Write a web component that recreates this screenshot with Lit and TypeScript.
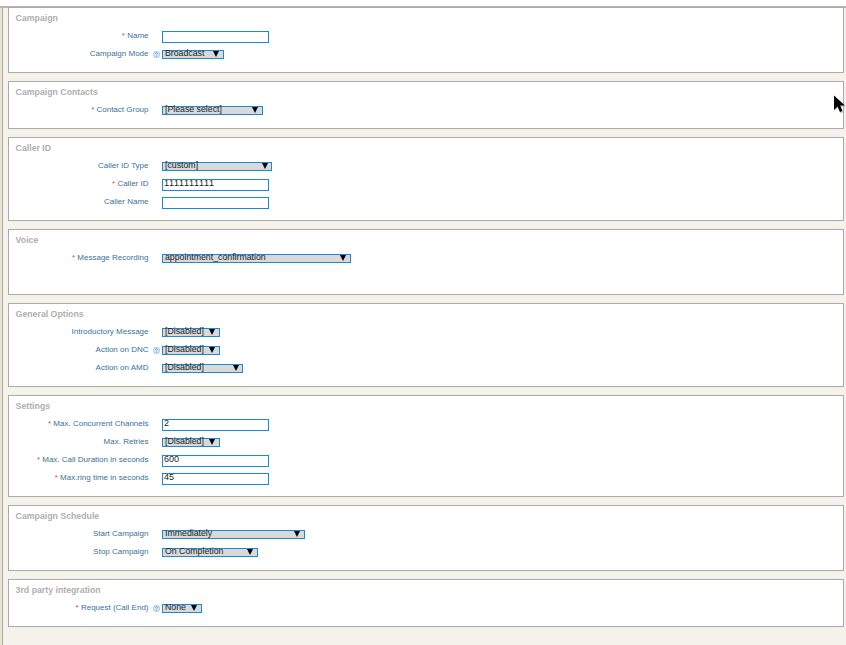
import { LitElement, html, css, nothing } from "lit";
import { customElement } from "lit/decorators.js";

type Row = { label: string; req?: boolean; help?: boolean; kind: "input" | "select"; value?: string; width?: number; arrow?: number };
type Panel = { title: string; height: number; rows: Row[] };

const panels: Panel[] = [
  { title: "Campaign", height: 66, rows: [
    { label: "Name", req: true, kind: "input" },
    { label: "Campaign Mode", help: true, kind: "select", value: "Broadcast", width: 62, arrow: 54 },
  ]},
  { title: "Campaign Contacts", height: 48, rows: [
    { label: "Contact Group", req: true, kind: "select", value: "[Please select]", width: 101, arrow: 93 },
  ]},
  { title: "Caller ID", height: 84, rows: [
    { label: "Caller ID Type", kind: "select", value: "[custom]", width: 110, arrow: 103 },
    { label: "Caller ID", req: true, kind: "input", value: "1111111111" },
    { label: "Caller Name", kind: "input" },
  ]},
  { title: "Voice", height: 66, rows: [
    { label: "Message Recording", req: true, kind: "select", value: "appointment_confirmation", width: 189, arrow: 181 },
  ]},
  { title: "General Options", height: 84, rows: [
    { label: "Introductory Message", kind: "select", value: "[Disabled]", width: 58, arrow: 50 },
    { label: "Action on DNC", help: true, kind: "select", value: "[Disabled]", width: 58, arrow: 50 },
    { label: "Action on AMD", kind: "select", value: "[Disabled]", width: 81, arrow: 74 },
  ]},
  { title: "Settings", height: 102, rows: [
    { label: "Max. Concurrent Channels", req: true, kind: "input", value: "2" },
    { label: "Max. Retries", kind: "select", value: "[Disabled]", width: 58, arrow: 50 },
    { label: "Max. Call Duration in seconds", req: true, kind: "input", value: "600" },
    { label: "Max.ring time in seconds", req: true, kind: "input", value: "45" },
  ]},
  { title: "Campaign Schedule", height: 66, rows: [
    { label: "Start Campaign", kind: "select", value: "Immediately", width: 143, arrow: 135 },
    { label: "Stop Campaign", kind: "select", value: "On Completion", width: 96, arrow: 88 },
  ]},
  { title: "3rd party integration", height: 48, rows: [
    { label: "Request (Call End)", req: true, help: true, kind: "select", value: "None", width: 40, arrow: 32 },
  ]},
];

@customElement("app-root")
export class AppRoot extends LitElement {
  static styles = css`
    :host { display: block; width: 846px; height: 645px; overflow: hidden; position: relative;
      background: #fff; font-family: "Liberation Sans", Arial, sans-serif; }
    .page { margin-top: 6px; height: 639px; box-sizing: border-box; border-top: 2px solid #b5b5b1;
      display: flex; background: #f5f2ec; }
    .rail { width: 2px; background: #e6e4d4; border-right: 1px solid #a9a99f; flex: none; }
    .content { flex: 1; padding: 0 2px 0 5px; display: flex; flex-direction: column; gap: 8px; margin-top: -1px; }
    .panel { box-sizing: border-box; background: #fff; border: 1px solid #aaa; flex: none; padding: 5px 6px 0; }
    .title { font-size: 8.75px; line-height: 10px; font-weight: bold; color: #b0b0b0; height: 13px; padding-left: 0.6px; }
    .rows { display: flex; flex-direction: column; }
    .row { display: flex; height: 18px; align-items: flex-start; }
    .label { width: 133.5px; text-align: right; font-size: 8px; line-height: 10px; color: #3a7299;
      padding-top: 5px; flex: none; white-space: nowrap; }
    .req { color: #e8433f; }
    .helpcell { width: 13.5px; flex: none; display: flex; padding: 7px 0 0 4.5px; box-sizing: border-box; }
    .help { width: 7px; height: 7px; display: block; }
    .input { box-sizing: border-box; width: 107px; height: 12px; border: 1px solid #1b8ad6; background: #fff;
      font-size: 9px; font-kerning: none; line-height: 6px; color: #222; padding: 0 0 0 1px; margin-top: 5px; white-space: nowrap; }
    .select { box-sizing: border-box; height: 9px; border: 1px solid #1b8ad6; background: #d9d9d9; position: relative;
      font-size: 8.75px; line-height: 5px; color: #222; padding-left: 2px; margin-top: 6px; white-space: nowrap; }
    .arrow { position: absolute; top: 0; width: 0; height: 0; border-left: 3.5px solid transparent;
      border-right: 3.5px solid transparent; border-top: 6px solid #000; }
    .cursor { position: absolute; left: 833px; top: 95px; width: 13px; height: 20px; }
  `;

  private renderControl(r: Row) {
    if (r.kind === "input") return html`<div class="input">${r.value ?? ""}</div>`;
    return html`<div class="select" style="width:${r.width}px">${r.value}<span class="arrow" style="left:${(r.arrow ?? 0) - 4}px"></span></div>`;
  }

  render() {
    return html`
      <div class="page">
        <div class="rail"></div>
        <div class="content">
          ${panels.map((p) => html`
            <section class="panel" style="height:${p.height}px">
              <div class="title">${p.title}</div>
              <div class="rows">
                ${p.rows.map((r) => html`
                  <div class="row">
                    <div class="label">${r.req ? html`<span class="req">* </span>` : nothing}${r.label}</div>
                    <div class="helpcell">${r.help ? html`
                      <svg class="help" viewBox="0 0 8 8"><circle cx="4" cy="4" r="3.6" fill="#d8eaf7" stroke="#69b0e2" stroke-width=".7"/><path d="M2.9 3a1.1 1 0 1 1 1.6 .9L4 4.4V5M4 5.6v.8" fill="none" stroke="#3f86bd" stroke-width=".7"/></svg>` : nothing}</div>
                    ${this.renderControl(r)}
                  </div>`)}
              </div>
            </section>`)}
        </div>
      </div>
      <svg class="cursor" viewBox="0 0 13 20">
        <path d="M1.6 2 L1.6 16 L5 13 L7.4 18.5 L10 17.5 L7.8 12 L12.4 12 Z" fill="#bbb" opacity=".7"/>
        <path d="M1 0.5 L1 15 L4.5 11.5 L7 17 L9.5 16 L7.2 10.5 L12 10.5 Z" fill="#000"/>
      </svg>
    `;
  }
}
